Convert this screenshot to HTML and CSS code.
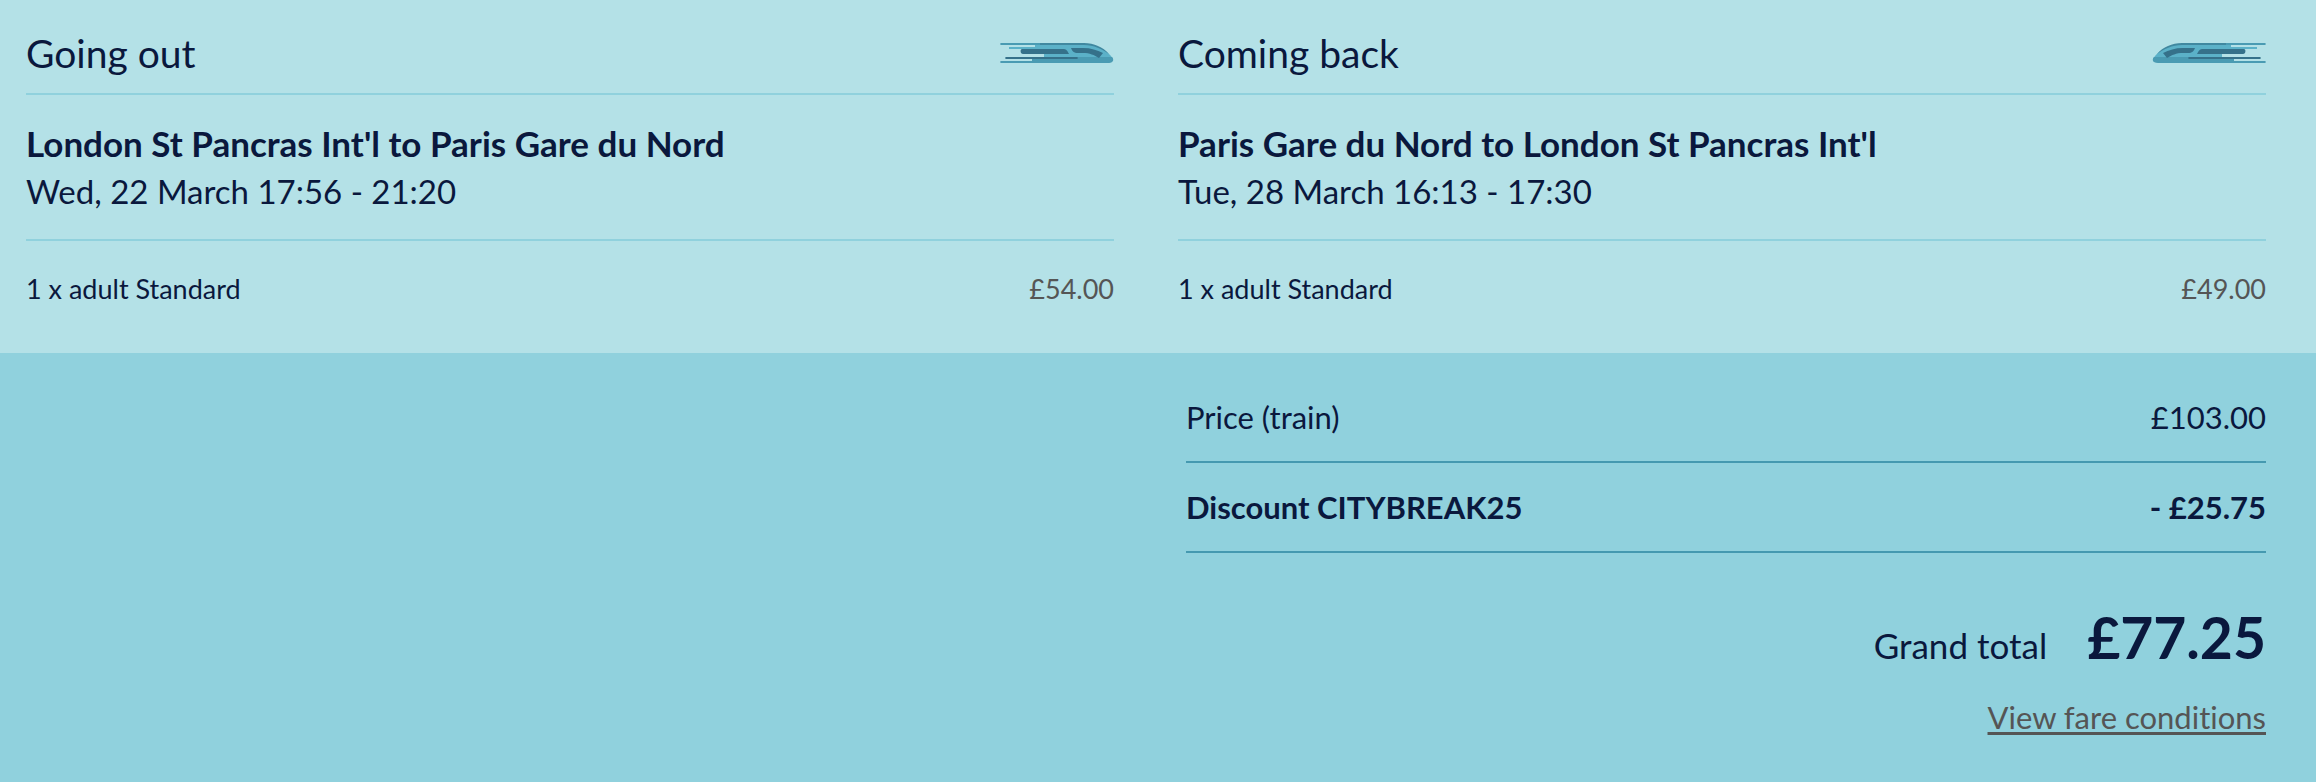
FILE: index.html
```html
<!DOCTYPE html>
<html lang="en">

<head>
    <meta charset="UTF-8">
    <meta name="viewport" content="width=device-width, initial-scale=1.0">
    <title>Your booking</title>
    <link rel="stylesheet" href="styles.css">
</head>

<body>

    <!-- train symbol, used by both journeys -->
    <svg class="symbols" aria-hidden="true">
        <symbol id="train" viewBox="0 0 114 20">
            <path fill="#5bb1c8" d="M9 4h26V1h50c10 0 20 5 26 12l2 3H44V6H9z" />
            <path fill="#4a9bb3" d="M1 18h31v-2h45v-2h35c2 2 2 6-4 6H1c-1 0-1-2 0-2z" />
            <path fill="#4a9bb3" d="M1 0h84v2H1C0 2 0 0 1 0z" />
            <path fill="#4088a0" d="M40 0h44c10 0 19 4 25 11C102 6 94 2 84 2H40z" />
            <path fill="#35718a" d="M22 6h41c3 0 4 1 6 5H23c-3 0-3-5-1-5z" />
            <path fill="#35718a" d="M71 5h12c8 0 14 2 20 5l-4 5c-5-3-9-5-16-5h-5c-4 0-6-2-7-5z" />
            <path fill="#35718a" d="M6 14h71c1 0 1 2 0 2H6c-1 0-1-2 0-2z" />
        </symbol>
    </svg>

    <div class="journeys">
        <section class="journey">
            <div class="journey-header">
                <h2>Going out</h2>
                <svg class="train" aria-hidden="true"><use href="#train" /></svg>
            </div>
            <div class="journey-details">
                <h3>London St Pancras Int'l to Paris Gare du Nord</h3>
                <p>Wed, 22 March 17:56 - 21:20</p>
            </div>
            <div class="fare">
                <span>1 x adult Standard</span>
                <span class="fare-price">£54.00</span>
            </div>
        </section>

        <section class="journey">
            <div class="journey-header">
                <h2>Coming back</h2>
                <svg class="train train-back" aria-hidden="true"><use href="#train" /></svg>
            </div>
            <div class="journey-details">
                <h3>Paris Gare du Nord to London St Pancras Int'l</h3>
                <p>Tue, 28 March 16:13 - 17:30</p>
            </div>
            <div class="fare">
                <span>1 x adult Standard</span>
                <span class="fare-price">£49.00</span>
            </div>
        </section>
    </div>

    <div class="summary">
        <div class="summary-content">
            <div class="summary-row">
                <span>Price (train)</span>
                <span>£103.00</span>
            </div>
            <div class="summary-row discount">
                <span>Discount CITYBREAK25</span>
                <span>- £25.75</span>
            </div>
            <div class="total">
                <span>Grand total</span>
                <strong>£77.25</strong>
            </div>
            <a class="conditions" href="#">View fare conditions</a>
        </div>
    </div>

</body>

</html>
```
FILE: styles.css
```css
body {
    font-family: Lato, sans-serif;
    font-variant-ligatures: none;
    background-color: #90d1dd;
    color: #0a183d;
    margin: 0;
}

h2,
h3,
p {
    margin: 0;
}

.symbols {
    display: none;
}

.journeys,
.summary {
    display: grid;
    grid-template-columns: 1fr 1fr;
    column-gap: 64px;
}

.journeys {
    padding: 14px 50px 32px 26px;
    background-color: #b4e1e7;
}

.journey-header {
    display: flex;
    justify-content: space-between;
    align-items: center;
    padding: 16px 0 17px;
    border-bottom: 2px solid #90d1dd;
}

h2 {
    font-size: 39px;
    font-weight: 400;
    line-height: 46px;
}

.train {
    width: 114px;
    height: 20px;
}

.train-back {
    transform: scaleX(-1);
}

.journey-details {
    padding: 24px 0;
    border-bottom: 2px solid #90d1dd;
    font-size: 33px;
    line-height: 48px;
}

h3 {
    font-size: 35px;
    font-weight: 700;
}

.fare {
    display: flex;
    justify-content: space-between;
    padding: 32px 0 16px;
    font-size: 27px;
    line-height: 32px;
}

.fare-price {
    color: #555;
}

.summary {
    padding: 20px 50px 40px 26px;
}

.summary-content {
    display: flex;
    flex-direction: column;
    grid-column: 2;
    margin-left: 8px;
}

.summary-row {
    display: flex;
    justify-content: space-between;
    padding: 24px 0;
    border-bottom: 2px solid #4599b0;
    font-size: 31px;
    line-height: 40px;
}

.discount {
    font-weight: 700;
}

.total {
    display: flex;
    justify-content: flex-end;
    align-items: baseline;
    gap: 40px;
    margin-top: 44px;
    font-size: 35px;
    line-height: 80px;
}

.total strong {
    font-size: 57px;
}

.conditions {
    align-self: flex-end;
    margin-top: 12px;
    color: #555;
    font-size: 31px;
    line-height: 40px;
    text-underline-offset: 3px;
    text-decoration-thickness: 3px;
    text-decoration-skip-ink: none;
}
```
